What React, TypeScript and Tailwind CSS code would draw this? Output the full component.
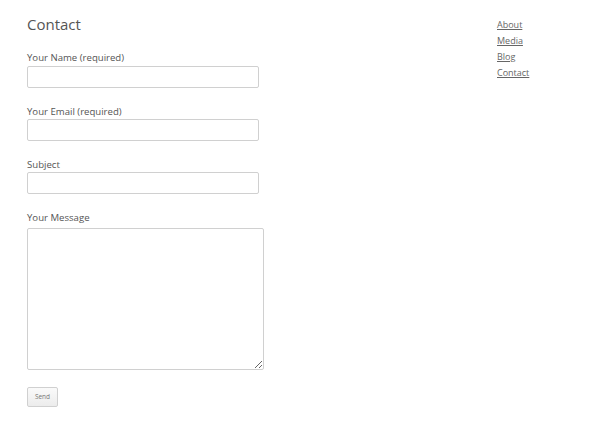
import React from "react";

export default function App() {
  const font = { fontFamily: '"Open Sans", "Noto Sans", sans-serif' };
  return (
    <div className="w-[600px] h-[422px] bg-white text-[#555]" style={font}>
      <div className="flex pl-[27px]">
        <main className="w-[470px] pt-[14px]">
          <h1 className="text-[15px] leading-[20px] text-[#555] font-normal">Contact</h1>
          <form className="mt-[16px] flex flex-col items-start">
            <label className="block text-[9.6px] leading-[15px] text-[#555]">Your Name (required)</label>
            <input type="text" className="block mt-[1px] w-[232px] h-[22px] border border-[#d0d0d0] rounded-[2px] bg-white" />
            <label className="block mt-[16px] text-[9.6px] leading-[15px] text-[#555]">Your Email (required)</label>
            <input type="text" className="block w-[232px] h-[22px] border border-[#d0d0d0] rounded-[2px] bg-white" />
            <label className="block mt-[16px] text-[9.6px] leading-[15px] text-[#555]">Subject</label>
            <input type="text" className="block w-[232px] h-[22px] border border-[#d0d0d0] rounded-[2px] bg-white" />
            <label className="block mt-[16px] text-[9.6px] leading-[15px] text-[#555]">Your Message</label>
            <textarea className="block mt-[3px] w-[237px] h-[142px] border border-[#d0d0d0] rounded-[2px] bg-white resize" />
            <button type="button" className="block mt-[17px] w-[31px] h-[20px] border border-[#d0d0d0] rounded-[2px] bg-gradient-to-b from-[#fafafa] to-[#ececec] text-[6.5px] leading-none text-[#777]">Send</button>
          </form>
        </main>
        <aside className="pt-[17px]">
          <ul className="flex flex-col">
            {["About", "Media", "Blog", "Contact"].map((t) => (
              <li key={t} className="text-[9px] leading-[16px]">
                <a href="#" className="underline text-[#666]">{t}</a>
              </li>
            ))}
          </ul>
        </aside>
      </div>
    </div>
  );
}
